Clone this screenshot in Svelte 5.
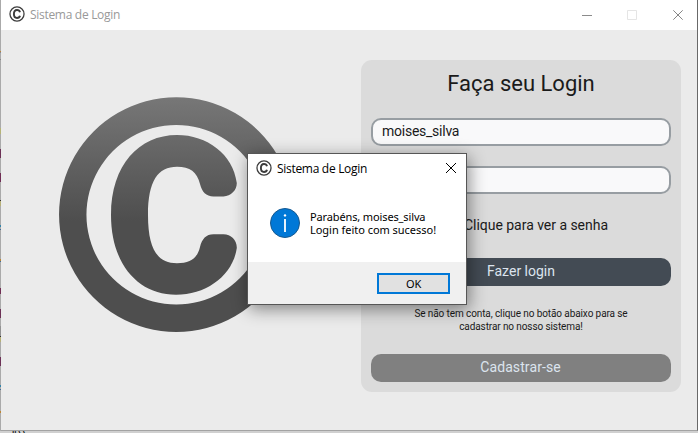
<script>
  const edgeMarks = [
    [51, 1, '#bd8634'], [52, 1, '#81889b'], [59, 1, '#888888'], [128, 6, '#b6b477'],
    [149, 9, '#6c3156'], [173, 9, '#702e54'], [200, 1, '#333333'], [201, 5, '#b6b077'],
    [225, 2, '#3384aa'], [229, 1, '#446e96'], [259, 2, '#bd8634'], [261, 1, '#446e96'],
    [288, 6, '#702e54'], [309, 9, '#6c3156'], [326, 10, '#929292'], [336, 1, '#333333'],
    [337, 5, '#b6b077'], [357, 9, '#6c3156'], [385, 2, '#3384aa'], [389, 1, '#446e96'],
    [411, 2, '#bd8634']
  ];
  let username = $state('moises_silva');
</script>

{#snippet smallMark()}
  <svg class="app-icon" width="16" height="16" viewBox="0 0 15 15" fill="none" stroke="#3c3c3c">
    <circle cx="7.5" cy="7.5" r="6.6" stroke-width="1.2" />
    <path d="M10.3 5.9C10 4.5 9 3.8 7.5 3.8C5.5 3.8 4.6 5.2 4.6 7.5C4.6 9.8 5.5 11.2 7.5 11.2C9 11.2 10 10.5 10.3 9.1" stroke-width="1.8" />
  </svg>
{/snippet}

<div class="desktop">
  <div class="edge">
    {#each edgeMarks as [top, height, color]}
      <i style="top:{top}px;height:{height}px;background:{color}"></i>
    {/each}
  </div>
  <main class="window">
    <header class="titlebar">
      {@render smallMark()}
      <span class="title">Sistema de Login</span>
      <svg class="controls" width="112" height="12" viewBox="0 0 112 12" fill="none">
        <path d="M0 6.5h10" stroke="#8b8b8b" />
        <path d="M45.5 1.5h9v9h-9z" stroke="#e5e5e5" />
        <path d="m91.3 1.3 9.4 9.4m0-9.4-9.4 9.4" stroke="#858585" />
      </svg>
    </header>
    <div class="content">
      <svg class="logo" viewBox="59 97 235 235" fill="url(#shade)">
        <defs>
          <linearGradient id="shade" gradientUnits="userSpaceOnUse" x1="0" y1="97" x2="0" y2="221">
            <stop offset="0" stop-color="#777777" />
            <stop offset="1" stop-color="#4e4e4e" />
          </linearGradient>
        </defs>
        <path fill-rule="evenodd" d="M176.3 97.3a117.3 117.3 0 1 0 .1 0ZM176.3 125a89.8 89.8 0 1 1-.1 0Z" />
        <path d="M236.8 183C233 154 207 135 177 135C139 135 111 165 111 215C111 265 139 294.8 176 294.8C207 294.8 233 275 236.8 248C237 240 231 234.3 223.5 234.3H213.5C206 234.3 202 239 200 247C197 259 190 263.2 177 263.2C158 263.2 148 250 148 215C148 181 158 166.8 177 166.8C190 166.8 197 172 200 184C202 192 206 196.4 213.5 196.4H223.5C231 196.4 237 190 236.8 183Z" />
      </svg>
      <section class="panel">
        <h1>Faça seu Login</h1>
        <input aria-label="Usuário" bind:value={username} />
        <input aria-label="Senha" type="password" />
        <div class="reveal">Clique para ver a senha</div>
        <button class="login">Fazer login</button>
        <p>Se não tem conta, clique no botão abaixo para se<br />cadastrar no nosso sistema!</p>
        <button class="register">Cadastrar-se</button>
      </section>
    </div>
  </main>
  <footer class="below"><span>os "))</span></footer>

  <div class="dialog" role="dialog" aria-label="Sistema de Login">
    <div class="dialog-title">
      {@render smallMark()}
      <span class="title">Sistema de Login</span>
      <svg class="close" width="12" height="12" viewBox="0 0 12 12">
        <path d="m1 1 10 10m0-10L1 11" stroke="#000" stroke-width="1" />
      </svg>
    </div>
    <div class="message">
      <svg width="30" height="30" viewBox="0 0 30 30">
        <circle cx="15" cy="15" r="14.5" fill="#0078d7" stroke="#17598f" />
        <circle cx="15" cy="7.4" r="1.2" fill="#fff" />
        <path d="M15 11v13" stroke="#fff" stroke-width="1.8" />
      </svg>
      <div class="text"><div class="first">Parabéns, moises_silva</div><div class="second">Login feito com sucesso!</div></div>
    </div>
    <div class="actions"><button class="ok">OK</button></div>
  </div>
</div>

<style>
  * { box-sizing: border-box; }
  :global(body) { margin: 0; overflow: hidden; }
  .desktop {
    position: relative; width: 698px; height: 433px; overflow: hidden;
    display: grid; grid-template: 431px 2px / 1px 697px; background: #d0d0d0;
  }
  .edge { position: relative; background: #aaa; }
  .edge i { position: absolute; left: 0; width: 1px; }
  .window {
    display: flex; flex-direction: column; background: #ebebeb;
    border-right: 1px solid #696969; border-bottom: 1px solid #a3a3a3;
  }
  .titlebar {
    height: 30px; flex: none; display: flex; align-items: center;
    padding: 0 3px 0 8px; background: #fff; color: #999;
  }
  .app-icon { flex: none; margin-top: -2px; }
  .title { font: 12px/16px "Open Sans", sans-serif; margin-left: 5px; white-space: nowrap; letter-spacing: -.3px; }
  .controls { margin: -1px 0 0 auto; }
  .content { display: flex; flex: 1; padding: 30px 16px 0 58px; justify-content: space-between; }
  .logo { width: 235px; height: 235px; margin-top: 37px; }
  .panel {
    width: 320px; height: 332px; padding: 0 10px; border-radius: 11px; background: #dbdbdb;
    display: flex; flex-direction: column; font-family: Roboto, sans-serif; color: #1a1a1a;
  }
  h1 { margin: 9px 0 19px; font-size: 22px; line-height: 30px; font-weight: 400; text-align: center; }
  input {
    width: 100%; height: 28px; margin: 0 0 20px; padding: 0 9px 2px; border: 2px solid #979da2;
    border-radius: 10px; background: #f9f9fa; outline: 0; font: 14px Roboto, sans-serif; letter-spacing: -.25px; color: #1a1a1a; flex: none;
  }
  .reveal { margin: 3px 0 24px 93px; line-height: 17px; font-size: 14px; white-space: nowrap; letter-spacing: -.03px; }
  .panel button {
    width: 100%; height: 28px; flex: none; border: 0; border-radius: 10px; padding: 0 0 2px;
    color: #dce4ee; font: 14px Roboto, sans-serif;
  }
  .panel .login { background: #434b54; }
  .panel .register { background: #808080; letter-spacing: .1px; padding-right: 1px; }
  p { margin: 21px 0 21px; font-size: 10px; line-height: 13px; letter-spacing: -.1px; text-align: center; height: 26px; white-space: nowrap; }
  .below { grid-column: 1 / 3; height: 2px; overflow: hidden; background: #d0d0d0; }
  .below span { display: block; font: 12px/14px "DejaVu Sans", sans-serif; margin: -2px 0 0 -6px; color: #111; }
  .dialog {
    position: absolute; left: 247px; top: 153px; width: 220px; height: 152px;
    display: flex; flex-direction: column; background: #fff; border: 1px solid #565656;
    box-shadow: 2px 4px 16px rgb(0 0 0 / 45%); color: #000;
  }
  .dialog-title { display: flex; align-items: center; height: 30px; padding: 0 9px 0 8px; }
  .close { margin: -2px 0 0 auto; }
  .message { display: flex; align-items: flex-start; height: 78px; padding: 24px 0 0 22px; }
  .text { margin: 2px 0 0 10px; font: 11px/13px "Noto Sans", sans-serif; white-space: nowrap; }
  .first { letter-spacing: -.13px; }
  .second { letter-spacing: -.03px; }
  .actions { flex: 1; background: #f0f0f0; padding: 11px 16px 0; display: flex; justify-content: flex-end; }
  .ok {
    width: 73px; height: 21px; border: 2px solid #0078d7; border-radius: 0; padding: 0;
    background: #e1e1e1; font: 11px/17px "Noto Sans", sans-serif; letter-spacing: -.3px; color: #000;
  }
</style>
